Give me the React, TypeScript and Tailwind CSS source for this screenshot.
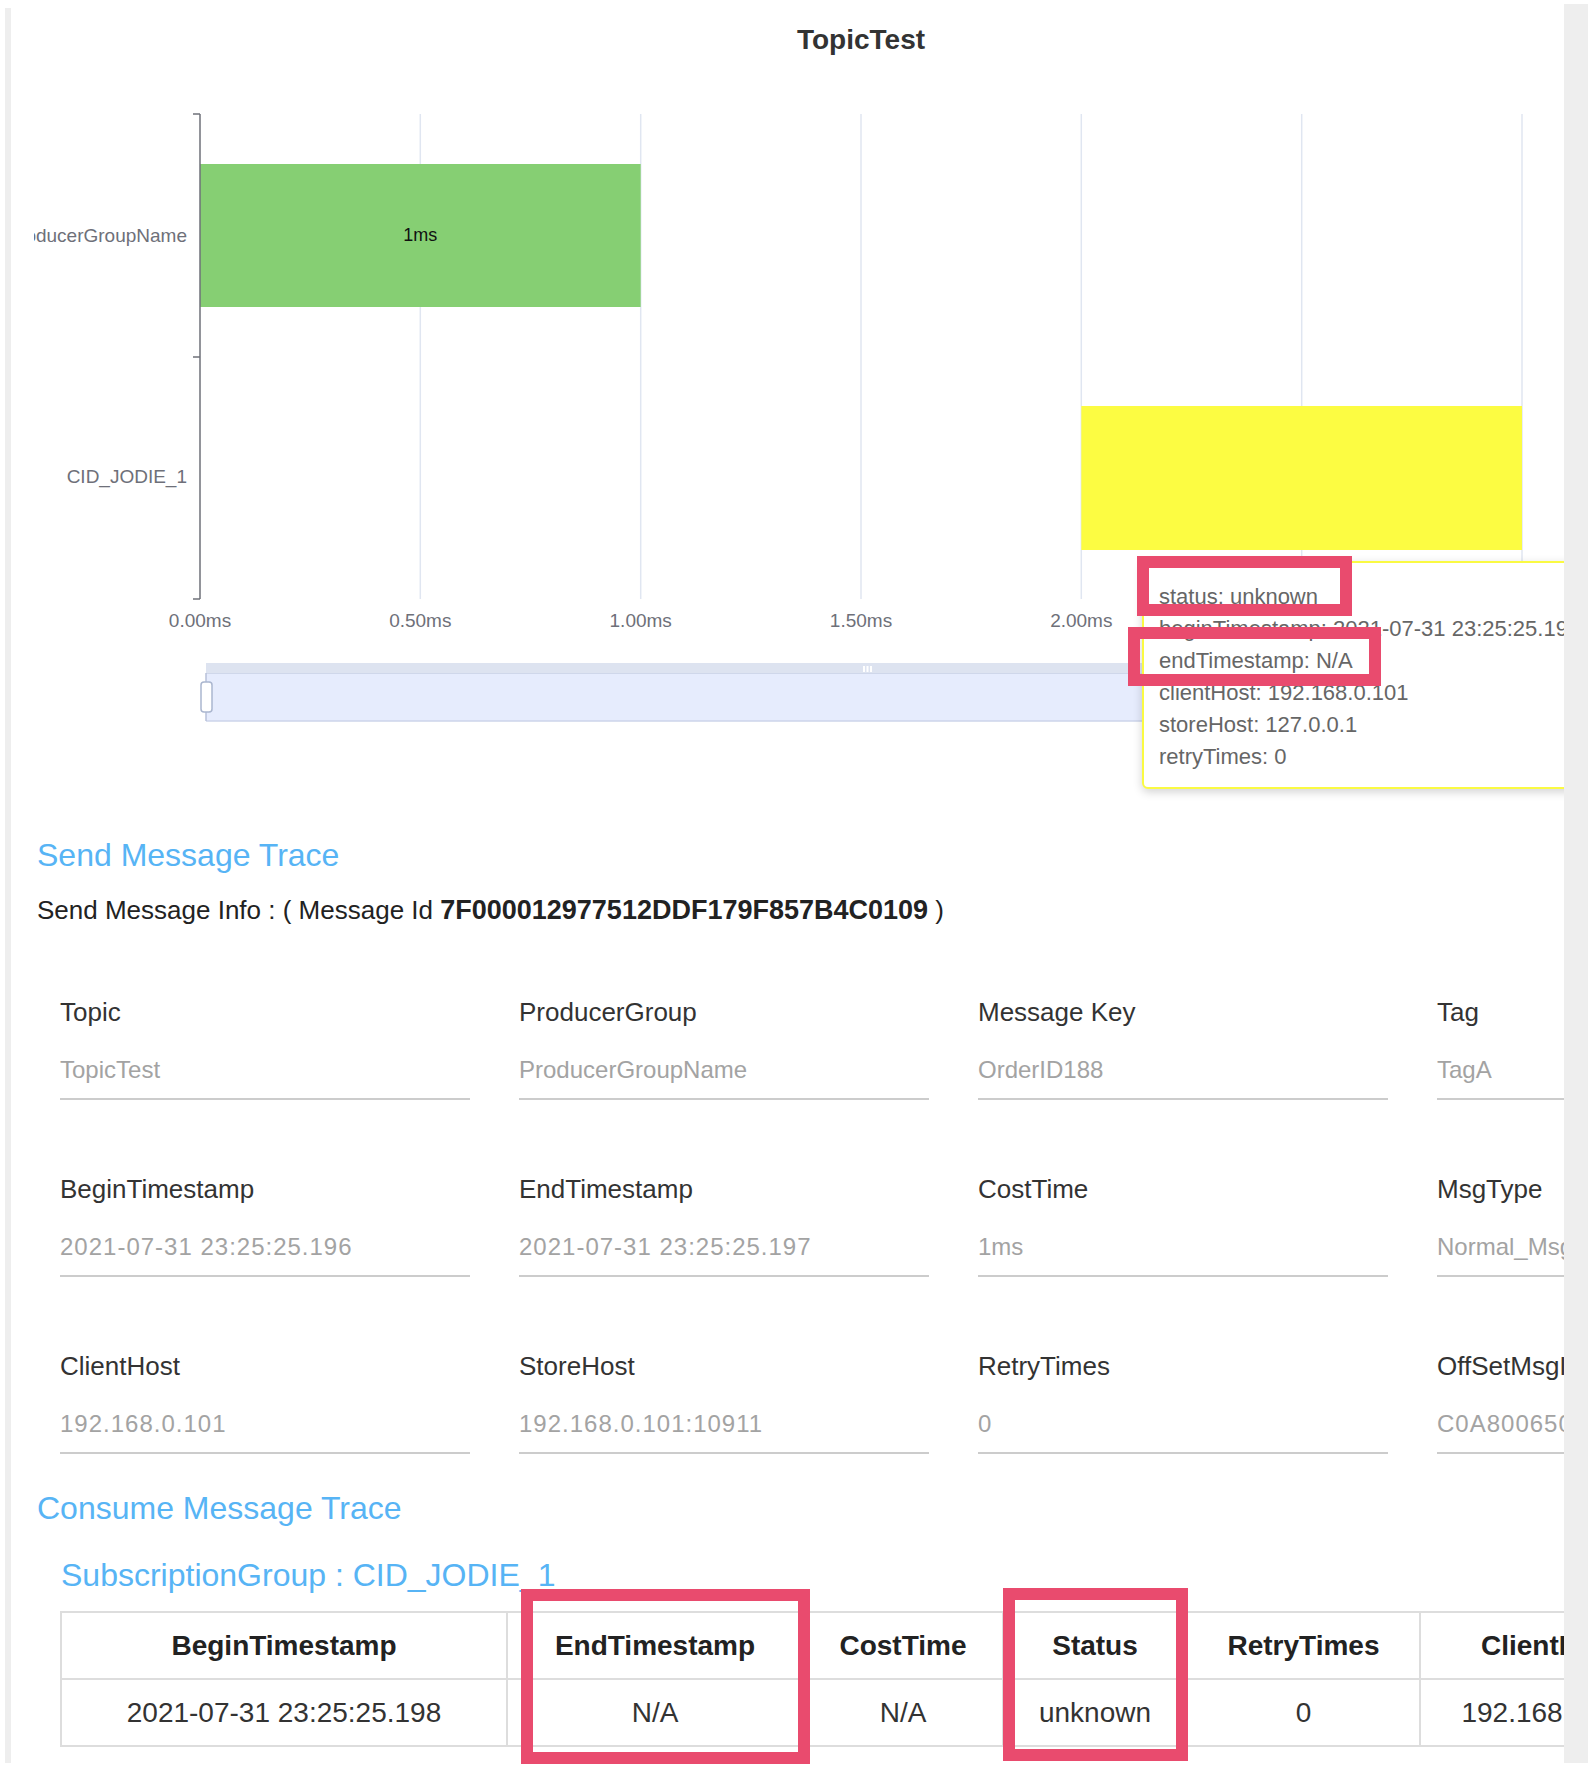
import React from "react";

const FONT = "Liberation Sans, Arial, sans-serif";

// x positions of the time axis gridlines (svg coords, canvas starts 34px from page left)
const gridX = [166, 386.3, 606.7, 827, 1047.3, 1267.7, 1488];
const ticks = ["0.00ms", "0.50ms", "1.00ms", "1.50ms", "2.00ms", "2.50ms", "3.00ms"];

// [label, value, numeric]
const fields: [string, string, boolean][] = [
  ["Topic", "TopicTest", false],
  ["ProducerGroup", "ProducerGroupName", false],
  ["Message Key", "OrderID188", false],
  ["Tag", "TagA", false],
  ["BeginTimestamp", "2021-07-31 23:25:25.196", true],
  ["EndTimestamp", "2021-07-31 23:25:25.197", true],
  ["CostTime", "1ms", false],
  ["MsgType", "Normal_Msg", false],
  ["ClientHost", "192.168.0.101", true],
  ["StoreHost", "192.168.0.101:10911", true],
  ["RetryTimes", "0", false],
  ["OffSetMsgId", "C0A8006500002A9F000000000000A3B2", true],
];

const columns = [
  { title: "BeginTimestamp", value: "2021-07-31 23:25:25.198", width: 446 },
  { title: "EndTimestamp", value: "N/A", width: 296 },
  { title: "CostTime", value: "N/A", width: 200 },
  { title: "Status", value: "unknown", width: 184 },
  { title: "RetryTimes", value: "0", width: 233 },
  { title: "ClientHost", value: "192.168.0.101", width: 262 },
  { title: "StoreHost", value: "127.0.0.1", width: 300 },
];

const tooltipLines = [
  "status: unknown",
  "beginTimestamp: 2021-07-31 23:25:25.198",
  "endTimestamp: N/A",
  "clientHost: 192.168.0.101",
  "storeHost: 127.0.0.1",
  "retryTimes: 0",
];

function TraceChart() {
  return (
    <svg width={1530} height={740} className="ml-[23px] block shrink-0" fontFamily={FONT}>
      <text x={827} y={49} textAnchor="middle" fontSize={28} fontWeight="bold" fill="#333">
        TopicTest
      </text>

      {/* grid */}
      {gridX.slice(1).map((x) => (
        <line key={x} x1={x} x2={x} y1={114} y2={599} stroke="#e0e6f1" strokeWidth={1.5} />
      ))}

      {/* bars */}
      <rect x={166} y={164} width={440.7} height={143} fill="#86cf73" />
      <text x={386.3} y={235} textAnchor="middle" dominantBaseline="central" fontSize={18} fill="#111">
        1ms
      </text>
      <rect x={1047.3} y={406} width={440.7} height={144} fill="#fcfc42" />

      {/* y axis */}
      <line x1={166} x2={166} y1={114} y2={599} stroke="#6e7079" strokeWidth={1.5} />
      {[114, 357, 599].map((y) => (
        <line key={y} x1={159} x2={166} y1={y} y2={y} stroke="#6e7079" strokeWidth={1.5} />
      ))}
      <text x={153} y={235} textAnchor="end" dominantBaseline="central" fontSize={19} fill="#6e7079">
        ProducerGroupName
      </text>
      <text x={153} y={476} textAnchor="end" dominantBaseline="central" fontSize={19} fill="#6e7079">
        CID_JODIE_1
      </text>

      {/* x labels */}
      {gridX.map((x, i) => (
        <text key={i} x={x} y={620} textAnchor="middle" dominantBaseline="central" fontSize={19} fill="#6e7079">
          {ticks[i]}
        </text>
      ))}

      {/* data zoom slider */}
      <rect x={172} y={663} width={1316} height={10} fill="#dde3f0" />
      <rect x={172} y={673} width={1316} height={48} fill="#e6ecfd" />
      <line x1={172} x2={1488} y1={673.5} y2={673.5} stroke="#cfd7ea" strokeWidth={1} />
      <line x1={172} x2={1488} y1={721} y2={721} stroke="#cdd5ea" strokeWidth={1.5} />
      <line x1={172} x2={172} y1={673} y2={721} stroke="#b7c1d9" strokeWidth={1.5} />
      <rect x={167} y={682} width={11} height={30} rx={3} fill="#fff" stroke="#aab6cf" strokeWidth={1.5} />
      <rect x={829} y={666} width={2} height={6} fill="#fff" />
      <rect x={832.5} y={666} width={2} height={6} fill="#fff" />
      <rect x={836} y={666} width={2} height={6} fill="#fff" />
    </svg>
  );
}

export default function App() {
  return (
    <div className="flex w-[1588px] h-[1770px] bg-white font-['Liberation_Sans',Arial,sans-serif]">
      <div className="w-[5px] shrink-0" />
      <div className="w-[6px] shrink-0 bg-[#eeeeee] mt-[8px] mb-[7px]" />

      <main className="relative flex-1 overflow-hidden flex flex-col">
        <TraceChart />

        <section className="pl-[26px] flex flex-col">
          <h2 className="mt-[96px] text-[32px] leading-[38px] text-[#57b4f5] whitespace-nowrap">Send Message Trace</h2>
          <p className="mt-[20px] text-[26px] leading-[32px] text-[#222] whitespace-nowrap">
            Send Message Info : ( Message Id <b className="text-[27px]">7F000012977512DDF179F857B4C0109</b> )
          </p>

          <div className="ml-[23px] mt-[71px] grid grid-cols-[410px_410px_410px_410px] gap-x-[49px] gap-y-[74px] w-max">
            {fields.map(([label, value, numeric]) => (
              <div key={label} className="flex flex-col">
                <div className="text-[26px] leading-[30px] text-[#333] whitespace-nowrap">{label}</div>
                <div
                  className={
                    "mt-[28px] pb-[13px] border-b-2 border-[#cccccc] text-[24px] leading-[30px] text-[#a3a3a3] whitespace-nowrap overflow-hidden " +
                    (numeric ? "tracking-[1px]" : "")
                  }
                >
                  {value}
                </div>
              </div>
            ))}
          </div>

          <h2 className="mt-[35px] text-[32px] leading-[38px] text-[#57b4f5] whitespace-nowrap">Consume Message Trace</h2>
          <h3 className="ml-[24px] mt-[29px] text-[32px] leading-[38px] text-[#57b4f5] whitespace-nowrap">
            SubscriptionGroup : CID_JODIE_1
          </h3>

          <table className="ml-[23px] mt-[17px] border-collapse table-fixed w-max">
            <colgroup>
              {columns.map((c) => (
                <col key={c.title} style={{ width: c.width }} />
              ))}
            </colgroup>
            <thead>
              <tr>
                {columns.map((c) => (
                  <th key={c.title} className="h-[67px] border-2 border-[#dddddd] text-[28px] font-bold text-[#222] text-center whitespace-nowrap">
                    {c.title}
                  </th>
                ))}
              </tr>
            </thead>
            <tbody>
              <tr>
                {columns.map((c) => (
                  <td key={c.title} className="h-[67px] border-2 border-[#dddddd] text-[28px] text-[#333] text-center whitespace-nowrap">
                    {c.value}
                  </td>
                ))}
              </tr>
            </tbody>
          </table>
        </section>

        {/* chart tooltip */}
        <div className="absolute left-[1131px] top-[561px] w-[470px] h-[228px] bg-white border-2 border-[#fafa42] rounded-[6px] shadow-[0_3px_10px_rgba(0,0,0,0.18)] pl-[15px] pt-[18px] text-[22px] leading-[32px] text-[#666] whitespace-nowrap">
          {tooltipLines.map((l) => (
            <div key={l}>{l}</div>
          ))}
        </div>

        {/* annotation boxes */}
        <div className="absolute left-[1126px] top-[556px] w-[215px] h-[60px] border-[12px] border-[#e94b6e]" />
        <div className="absolute left-[1117px] top-[627px] w-[253px] h-[59px] border-[12px] border-[#e94b6e]" />
        <div className="absolute left-[510px] top-[1589px] w-[289px] h-[175px] border-[12px] border-[#e94b6e]" />
        <div className="absolute left-[992px] top-[1588px] w-[185px] h-[173px] border-[12px] border-[#e94b6e]" />
      </main>

      <div className="w-[24px] shrink-0 bg-[#eeeeee] mt-[4px] mb-[7px]" />
    </div>
  );
}
